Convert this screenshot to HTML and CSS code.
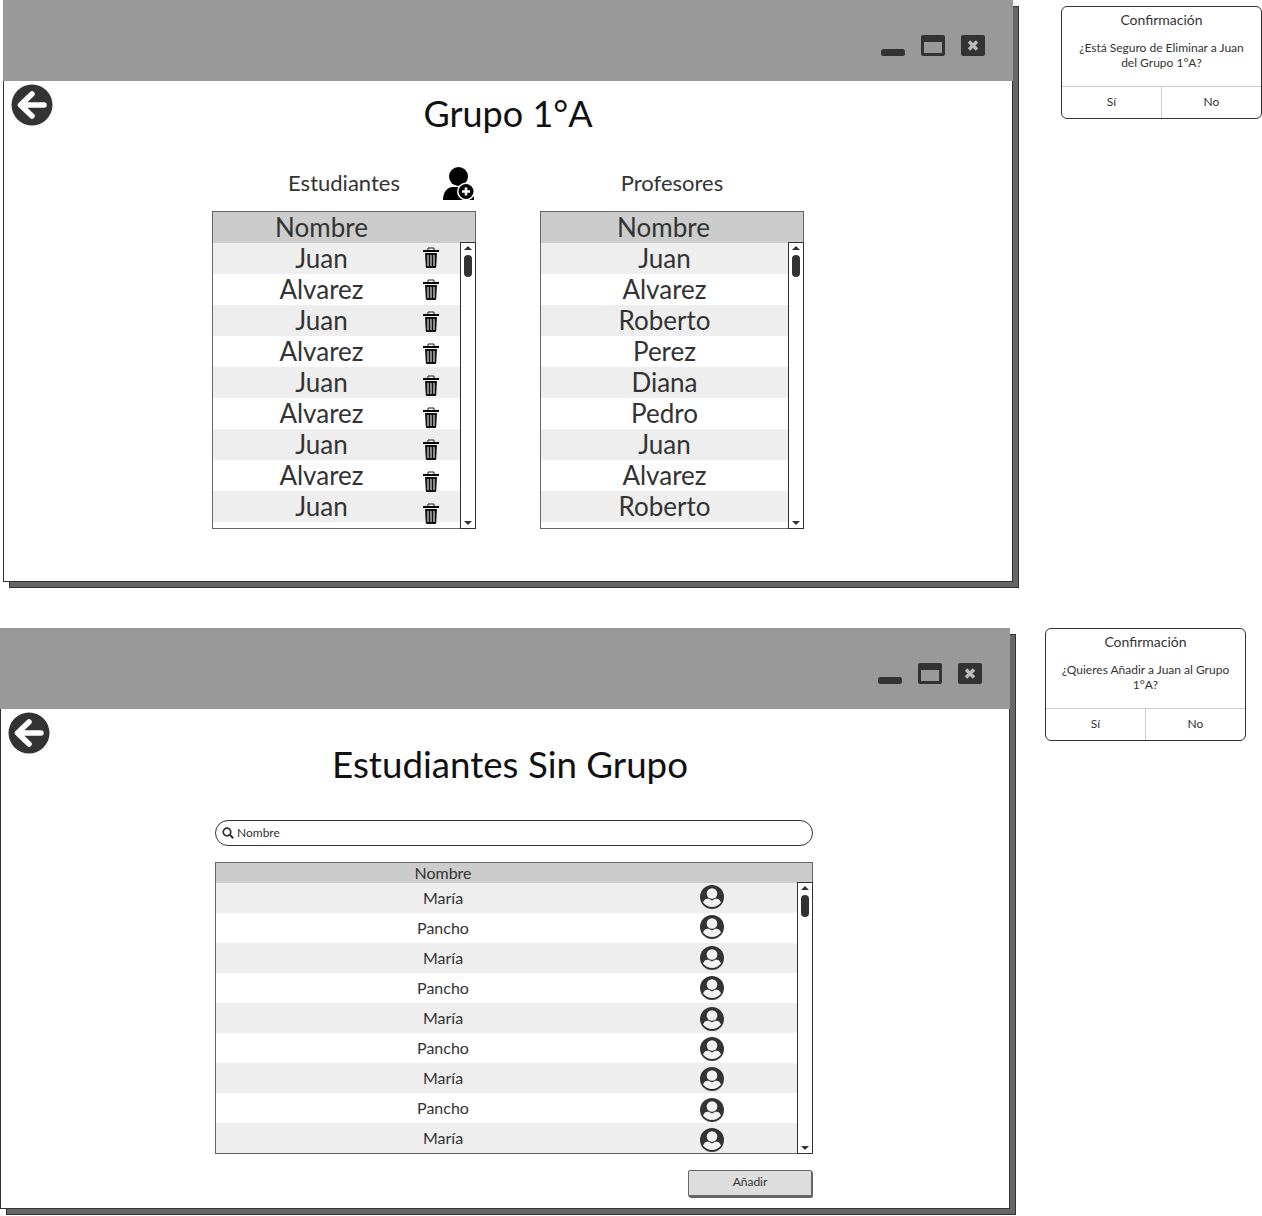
FILE: index.html
```html
<!DOCTYPE html>
<html lang="es">
<head>
  <meta charset="UTF-8">
  <title>Grupo 1°A</title>
  <link rel="stylesheet" href="styles.css">
</head>
<body>
  <svg class="sprites" width="0" height="0">
    <symbol id="back" viewBox="0 0 42 42">
      <circle cx="21" cy="21" r="20.5" fill="#333"/>
      <path d="M21 10 L9.5 21 L21 32 M10 21 H33" fill="none" stroke="#fff" stroke-width="5.5" stroke-linejoin="round" stroke-linecap="round"/>
    </symbol>
    <symbol id="trash" viewBox="0 0 16 21">
      <path d="M5 3 V1 H11 V3" fill="none" stroke="#222" stroke-width="1"/>
      <rect x="0" y="3" width="16" height="2" fill="#000"/>
      <path d="M2 6 H14 L13.2 20 Q13 21 12 21 H4 Q3 21 2.8 20 Z" fill="#111"/>
      <path d="M5 8 V19 M8 8 V19 M11 8 V19" stroke="#bbb" stroke-width="1.4"/>
    </symbol>
    <symbol id="avatar" viewBox="0 0 24 24">
      <circle cx="12" cy="12" r="12" fill="#333"/>
      <circle cx="12" cy="8.5" r="5.300" fill="#f2f2f2"/>
      <path d="M3 17.500 C5 13 8 13 12 15.500 C16 13 19 13 21 17.500 C18.500 20.800 15 22 12 22 C9 22 5.500 20.800 3 17.500 Z" fill="#f2f2f2"/>
    </symbol>
    <symbol id="min" viewBox="0 0 24 7">
      <rect width="24" height="7" rx="2.5" fill="#333"/>
    </symbol>
    <symbol id="max" viewBox="0 0 24 21">
      <rect width="24" height="21" rx="2" fill="#333"/>
      <rect x="3" y="7" width="18" height="11" fill="#999"/>
    </symbol>
    <symbol id="close" viewBox="0 0 24 21">
      <rect width="24" height="21" rx="2" fill="#333"/>
      <path d="M8 6.5 L16 14.5 M16 6.5 L8 14.5" stroke="#bbb" stroke-width="3.4"/>
    </symbol>
  </svg>

  <section class="window window-group">
    <header class="titlebar">
      <svg class="ctl ctl-min"><use href="#min"/></svg>
      <svg class="ctl ctl-max"><use href="#max"/></svg>
      <svg class="ctl ctl-close"><use href="#close"/></svg>
    </header>
    <svg class="back"><use href="#back"/></svg>
    <h1 class="title title-group">Grupo 1°A</h1>

    <div class="columns">
      <div class="column">
        <div class="column-head">
          <h2>Estudiantes</h2>
          <svg class="add-user" viewBox="0 0 32 33">
            <circle cx="15.500" cy="9.500" r="9.500" fill="#000"/>
            <path d="M0 33 C0 24 5 20 10 20 H21 C26 20 31 24 31 33 Z" fill="#000"/>
            <circle cx="23" cy="24.500" r="9" fill="#fff"/>
            <circle cx="23" cy="24.500" r="7.500" fill="#000"/>
            <path d="M23 20.500 V28.500 M19 24.500 H27" stroke="#fff" stroke-width="2.600"/>
          </svg>
        </div>
        <div class="table table-big">
          <div class="table-head name-students">Nombre</div>
          <div class="table-body">
            <div class="rows">
              <div class="row name-students">Juan</div>
              <div class="row name-students">Alvarez</div>
              <div class="row name-students">Juan</div>
              <div class="row name-students">Alvarez</div>
              <div class="row name-students">Juan</div>
              <div class="row name-students">Alvarez</div>
              <div class="row name-students">Juan</div>
              <div class="row name-students">Alvarez</div>
              <div class="row name-students">Juan</div>
            </div>
            <div class="scrollbar"><span class="up"></span><span class="thumb"></span><span class="down"></span></div>
          </div>
          <div class="trash-col">
            <svg><use href="#trash"/></svg>
            <svg><use href="#trash"/></svg>
            <svg><use href="#trash"/></svg>
            <svg><use href="#trash"/></svg>
            <svg><use href="#trash"/></svg>
            <svg><use href="#trash"/></svg>
            <svg><use href="#trash"/></svg>
            <svg><use href="#trash"/></svg>
            <svg><use href="#trash"/></svg>
          </div>
        </div>
      </div>

      <div class="column">
        <div class="column-head">
          <h2>Profesores</h2>
        </div>
        <div class="table table-big">
          <div class="table-head name-teachers">Nombre</div>
          <div class="table-body">
            <div class="rows">
              <div class="row">Juan</div>
              <div class="row">Alvarez</div>
              <div class="row">Roberto</div>
              <div class="row">Perez</div>
              <div class="row">Diana</div>
              <div class="row">Pedro</div>
              <div class="row">Juan</div>
              <div class="row">Alvarez</div>
              <div class="row">Roberto</div>
            </div>
            <div class="scrollbar"><span class="up"></span><span class="thumb"></span><span class="down"></span></div>
          </div>
        </div>
      </div>
    </div>
  </section>

  <section class="window window-free">
    <header class="titlebar">
      <svg class="ctl ctl-min"><use href="#min"/></svg>
      <svg class="ctl ctl-max"><use href="#max"/></svg>
      <svg class="ctl ctl-close"><use href="#close"/></svg>
    </header>
    <svg class="back"><use href="#back"/></svg>
    <h1 class="title title-free">Estudiantes Sin Grupo</h1>

    <div class="free-content">
      <div class="search">
        <svg viewBox="0 0 12 12">
          <circle cx="5" cy="5" r="3.800" fill="none" stroke="#333" stroke-width="1.700"/>
          <path d="M7.800 7.800 L11.200 11.200" stroke="#333" stroke-width="2"/>
        </svg>
        <span>Nombre</span>
      </div>

      <div class="table table-wide">
        <div class="table-head">Nombre</div>
        <div class="table-body">
          <div class="rows">
            <div class="row">María</div>
            <div class="row">Pancho</div>
            <div class="row">María</div>
            <div class="row">Pancho</div>
            <div class="row">María</div>
            <div class="row">Pancho</div>
            <div class="row">María</div>
            <div class="row">Pancho</div>
            <div class="row">María</div>
          </div>
          <div class="scrollbar"><span class="up"></span><span class="thumb"></span><span class="down"></span></div>
        </div>
        <div class="avatar-col">
          <svg><use href="#avatar"/></svg>
          <svg><use href="#avatar"/></svg>
          <svg><use href="#avatar"/></svg>
          <svg><use href="#avatar"/></svg>
          <svg><use href="#avatar"/></svg>
          <svg><use href="#avatar"/></svg>
          <svg><use href="#avatar"/></svg>
          <svg><use href="#avatar"/></svg>
          <svg><use href="#avatar"/></svg>
        </div>
      </div>

      <div class="actions">
        <button class="btn">Añadir</button>
      </div>
    </div>
  </section>

  <aside class="dialog dialog-delete">
    <h3>Confirmación</h3>
    <p>¿Está Seguro de Eliminar a Juan del Grupo 1°A?</p>
    <div class="dialog-buttons"><span>Sí</span><span>No</span></div>
  </aside>

  <aside class="dialog dialog-add">
    <h3>Confirmación</h3>
    <p>¿Quieres Añadir a Juan al Grupo 1°A?</p>
    <div class="dialog-buttons"><span>Sí</span><span>No</span></div>
  </aside>
</body>
</html>
```

FILE: styles.css
```css
* {
  box-sizing: border-box;
}

html, body {
  margin: 0;
  padding: 0;
}

body {
  position: relative;
  width: 1262px;
  height: 1216px;
  overflow: hidden;
  background: #fff;
  color: #333;
  font-family: "Lato", "Liberation Sans", sans-serif;
}

.sprites {
  position: absolute;
}

/* Windows sit on a free canvas */
.window {
  position: absolute;
  width: 1010px;
  height: 581px;
  background: #fff;
  border-left: 1px solid #333;
  border-bottom: 1px solid #333;
  border-right: 1px solid #333;
}

.window::before {
  content: "";
  position: absolute;
  z-index: -1;
  left: 5px;
  top: 6px;
  right: -7px;
  bottom: -7px;
  background: #666;
  border: 1px solid #333;
}

.window-group {
  left: 3px;
  top: 0;
  height: 582px;
}

.window-free {
  left: 0;
  top: 628px;
}

.titlebar {
  position: relative;
  height: 81px;
  margin: 0 -1px;
  background: #999;
}

.ctl {
  position: absolute;
}

.ctl-min {
  left: 878px;
  top: 49px;
  width: 24px;
  height: 7px;
}

.ctl-max {
  left: 918px;
  top: 35px;
  width: 24px;
  height: 21px;
}

.ctl-close {
  left: 958px;
  top: 35px;
  width: 24px;
  height: 21px;
}

.back {
  position: absolute;
  left: 7px;
  top: 84px;
  width: 42px;
  height: 42px;
}

.title {
  margin: 0;
  color: #111;
  font-weight: 400;
  text-align: center;
  font-size: 36px;
  line-height: 44px;
}

.title-group {
  padding-top: 10px;
}

.title-free {
  padding: 33px 0 0 10px;
  font-size: 36.700px;
}

.columns {
  display: flex;
  gap: 64px;
  padding: 0 0 0 208px;
  margin-top: 29px;
}

.column {
  width: 264px;
}

.column-head {
  position: relative;
  height: 47px;
  padding-top: 5px;
}

.column-head h2 {
  margin: 0;
  font-size: 22px;
  font-weight: 400;
  line-height: 28px;
  text-align: center;
}

.add-user {
  position: absolute;
  left: 231px;
  top: 3px;
  width: 32px;
  height: 33px;
}

/* Tables */
.table {
  position: relative;
  display: flex;
  flex-direction: column;
  border: 1px solid #666;
  background: #fff;
}

.table-big {
  height: 318px;
  font-size: 26px;
}

.table-big .table-head {
  height: 31px;
  line-height: 30px;
  text-align: center;
  padding-right: 17px;
}

.table-big .row {
  height: 31px;
  line-height: 30px;
}

.table-big .table-head.name-students {
  padding-right: 45px;
}

.table-big .row.name-students {
  padding-right: 30px;
}

.table-head {
  flex: none;
  background: #ccc;
}

.table-body {
  flex: 1;
  display: flex;
  min-height: 0;
}

.rows {
  flex: 1;
}

.row {
  text-align: center;
}

.row:nth-child(odd) {
  background: #eee;
}

.scrollbar {
  flex: none;
  position: relative;
  width: 16px;
  margin: -1px -1px -1px 0;
  border: 1px solid #333;
  background: #fff;
}

.scrollbar .up,
.scrollbar .down {
  position: absolute;
  left: 3px;
  width: 0;
  height: 0;
  border-left: 4px solid transparent;
  border-right: 4px solid transparent;
}

.scrollbar .up {
  top: 3px;
  border-bottom: 4px solid #333;
}

.scrollbar .down {
  bottom: 3px;
  border-top: 4px solid #333;
}

.scrollbar .thumb {
  position: absolute;
  left: 3px;
  top: 12px;
  width: 8px;
  height: 22px;
  border-radius: 4px;
  background: #333;
}

.trash-col {
  position: absolute;
  left: 210px;
  top: 35px;
  width: 16px;
  display: flex;
  flex-direction: column;
  gap: 11px;
}

.trash-col svg {
  display: block;
  width: 16px;
  height: 21px;
}

/* Lower window */
.free-content {
  width: 598px;
  margin: 0 0 0 214px;
}

.search {
  display: flex;
  align-items: center;
  gap: 3px;
  height: 26px;
  margin-top: 34px;
  padding: 0 0 1px 6px;
  border: 1px solid #333;
  border-radius: 13px;
  font-size: 12px;
}

.search svg {
  width: 12px;
  height: 12px;
}

.table-wide {
  height: 292px;
  margin-top: 16px;
  font-size: 16px;
}

.table-wide .table-head {
  height: 20px;
  line-height: 20px;
  width: 596px;
  padding-right: 142px;
  text-align: center;
}

.table-wide .row {
  height: 30px;
  line-height: 29px;
  padding-right: 127px;
}

.avatar-col {
  position: absolute;
  left: 484px;
  top: 22px;
  width: 24px;
  display: flex;
  flex-direction: column;
  gap: 6.400px;
}

.avatar-col svg {
  display: block;
  width: 24px;
  height: 24px;
}

.actions {
  display: flex;
  justify-content: flex-end;
  margin-top: 16px;
  padding-right: 1px;
}

.btn {
  width: 124px;
  height: 27px;
  padding: 0 0 3px;
  background: #ddd;
  border: 1px solid #666;
  border-bottom-width: 2px;
  border-radius: 2px;
  color: #333;
  font-family: inherit;
  font-size: 12px;
  box-shadow: 1px 1px 0 #666;
}

/* Dialogs */
.dialog {
  position: absolute;
  width: 201px;
  height: 113px;
  display: flex;
  flex-direction: column;
  background: #fff;
  border: 1px solid #333;
  border-radius: 6px;
  text-align: center;
}

.dialog-delete {
  left: 1061px;
  top: 6px;
}

.dialog-add {
  left: 1045px;
  top: 628px;
}

.dialog h3 {
  margin: 0;
  padding-top: 4px;
  font-size: 14px;
  font-weight: 400;
  line-height: 18px;
}

.dialog p {
  flex: 1;
  margin: 0;
  padding: 11px 14px 0;
  font-size: 12px;
  line-height: 15px;
}

.dialog-buttons {
  flex: none;
  display: flex;
  height: 32px;
  border-top: 1px solid #ccc;
  font-size: 12px;
  line-height: 30px;
}

.dialog-buttons span {
  flex: 1;
}

.dialog-buttons span + span {
  border-left: 1px solid #ccc;
}
```
